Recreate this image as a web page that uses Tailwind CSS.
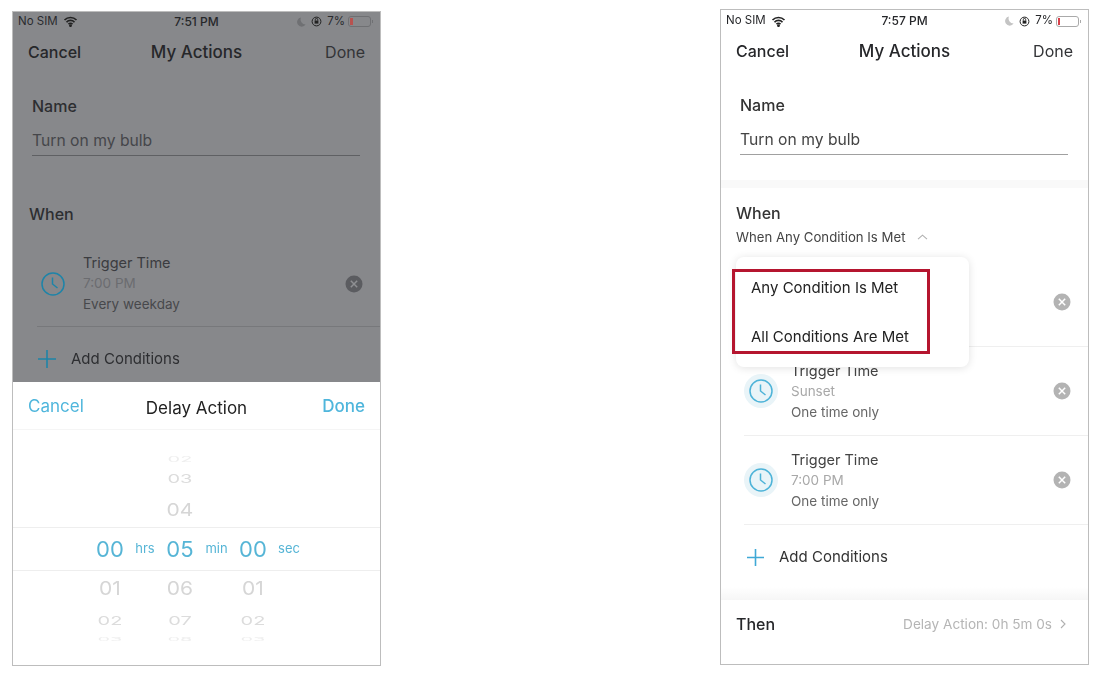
<!DOCTYPE html>
<html lang="en">
<head>
    <meta charset="UTF-8">
    <meta name="viewport" content="width=device-width, initial-scale=1.0">
    <title>My Actions</title>
    <script src="https://cdn.jsdelivr.net/npm/@tailwindcss/browser@4"></script>
</head>
<body class="bg-white [font-family:Inter,sans-serif]">
<div class="w-[1104px] h-[677px] flex justify-between pl-[12px] pr-[15px] overflow-hidden blur-[0.35px]">

    <!-- left phone: picker sheet over dimmed form -->
    <div class="mt-[11px] w-[369px] h-[655px] border border-[#bdbdbd] flex flex-col overflow-hidden">
        <div class="h-[370px] bg-[#87888b] flex flex-col text-[#26272a]">
            <div class="h-[19px] flex items-center justify-between pl-[5px] pr-[7px] text-[11.5px] relative">
                <div class="flex items-center gap-[5px] text-[#2a2b2e]">
                    <span>No SIM</span>
                    <svg width="15" height="11" viewBox="0 0 14 11" fill="none" stroke="#222" stroke-width="1.7"><path d="M1 4a8.5 8.5 0 0 1 12 0M3 6.2a5.4 5.4 0 0 1 8 0M5 8.2a2.6 2.6 0 0 1 4 0"/><circle cx="7" cy="9.6" r="0.6" fill="#222"/></svg>
                </div>
                <span class="absolute left-0 right-0 text-center text-[12px] font-medium">7:51 PM</span>
                <div class="flex items-center gap-[5px]">
                    <svg width="9" height="10" viewBox="0 0 9 10"><path d="M4 0.5a4.6 4.6 0 1 0 4.6 7A5 5 0 0 1 4 .5z" fill="#6f7073"/></svg>
                    <svg width="11" height="11" viewBox="0 0 11 11" fill="none" stroke="#222" stroke-width="1"><circle cx="5.5" cy="5.5" r="4.4"/><rect x="3.6" y="4.6" width="3.8" height="3" fill="#222" stroke="none"/><path d="M4.3 4.6V3.6a1.2 1.2 0 0 1 2.4 0v1"/></svg>
                    <span class="text-[#2a2b2e] mr-[-2px]">7%</span>
                    <div class="flex items-center">
                        <div class="w-[23px] h-[11px] rounded-[3px] border border-[#6f7073] pl-[1px] py-[1px]"><div class="w-[3px] h-full bg-[#b8524f]"></div></div>
                        <div class="w-[1px] h-[3px] bg-[#6f7073] ml-[1px]"></div>
                    </div>
                </div>
            </div>
            <div class="h-[41px] flex items-center justify-between px-[15px] text-[16px] relative">
                <span class="font-medium">Cancel</span>
                <span class="absolute left-0 right-0 text-center text-[17px] font-medium mt-[3px]">My Actions</span>
                <span class="text-[#333437]">Done</span>
            </div>
            <div class="pl-[19px] pr-[20px] pt-[24px]">
                <div class="text-[16px] font-medium leading-[20px] text-[#2d2e31]">Name</div>
                <div class="mt-[15px] text-[15.7px] leading-[20px] pb-[4px] border-b border-[#5f6063] text-[#45464a]">Turn on my bulb</div>
            </div>
            <div class="pl-[16px] mt-[48px] text-[16px] font-medium leading-[20px] text-[#2d2e31]">When</div>
            <div class="ml-[24px] mt-[17px] h-[86px] flex items-center border-b border-[#77787b]">
                <svg class="shrink-0 ml-[3px]" width="26" height="26" viewBox="0 0 26 26" fill="none" stroke="#1e84a8" stroke-width="1.5"><circle cx="13" cy="13" r="11"/><path d="M12.5 6.5v6.5l5 4"/></svg>
                <div class="ml-[17px] flex-1 flex flex-col text-[13.5px] leading-[21px] text-[#47484c]">
                    <span class="text-[14.5px] text-[#3b3c40]">Trigger Time</span>
                    <span class="text-[#6b6c70]">7:00 PM</span>
                    <span>Every weekday</span>
                </div>
                <svg class="mr-[17px]" width="18" height="18" viewBox="0 0 18 18"><circle cx="9" cy="9" r="8.5" fill="#5b5c60"/><path d="M5.8 5.8l6.4 6.4M12.2 5.8l-6.4 6.4" stroke="#8e8f92" stroke-width="1.5"/></svg>
            </div>
            <div class="pl-[25px] mt-[19px] flex items-center h-[26px]">
                <svg width="18" height="18" viewBox="0 0 18 18" stroke="#1e84a8" stroke-width="1.6"><path d="M9 0v18M0 9h18"/></svg>
                <span class="ml-[15px] text-[15px] text-[#2d2e31]">Add Conditions</span>
            </div>
        </div>
        <div class="h-[48px] pt-[3px] flex items-center justify-between px-[15px] border-b border-[#f5f5f5] text-[17px] relative">
            <span class="text-[#4fb6dc]">Cancel</span>
            <span class="absolute left-0 right-0 text-center text-[#222] mt-[3px]">Delay Action</span>
            <span class="font-medium text-[#4fb6dc]">Done</span>
        </div>
        <div class="flex-1 flex flex-col">
            <div class="h-[12px] mt-[24px] flex items-center text-[20px] text-[#eeeeee] pl-[152px]"><span class="w-[30px] text-center scale-y-[0.35] blur-[0.5px]">02</span></div>
            <div class="h-[26px] flex items-center text-[20px] text-[#dcdcdc] pl-[152px]"><span class="w-[30px] text-center scale-y-[0.6]">03</span></div>
            <div class="h-[35px] flex items-center text-[21px] text-[#d6d6d6] pl-[152px]"><span class="w-[30px] text-center scale-y-[0.85]">04</span></div>
            <div class="h-[44px] flex items-center border-y border-[#eeeeee] text-[#56b5d6] pl-[82px]">
                <span class="w-[30px] text-center text-[22px]">00</span>
                <span class="w-[40px] text-center text-[13px]">hrs</span>
                <span class="w-[30px] text-center text-[22px]">05</span>
                <span class="w-[43px] text-center text-[13px]">min</span>
                <span class="w-[30px] text-center text-[22px]">00</span>
                <span class="w-[42px] text-center text-[13px]">sec</span>
            </div>
            <div class="h-[35px] flex items-center text-[21px] text-[#d6d6d6] pl-[82px]">
                <span class="w-[30px] text-center scale-y-[0.9]">01</span><span class="w-[40px]"></span>
                <span class="w-[30px] text-center scale-y-[0.9]">06</span><span class="w-[43px]"></span>
                <span class="w-[30px] text-center scale-y-[0.9]">01</span>
            </div>
            <div class="h-[30px] flex items-center text-[20px] text-[#dcdcdc] pl-[82px]">
                <span class="w-[30px] text-center scale-y-[0.6]">02</span><span class="w-[40px]"></span>
                <span class="w-[30px] text-center scale-y-[0.6]">07</span><span class="w-[43px]"></span>
                <span class="w-[30px] text-center scale-y-[0.6]">02</span>
            </div>
            <div class="h-[6px] flex items-center text-[20px] text-[#eeeeee] pl-[82px]">
                <span class="w-[30px] text-center scale-y-[0.25] blur-[0.5px]">03</span><span class="w-[40px]"></span>
                <span class="w-[30px] text-center scale-y-[0.25] blur-[0.5px]">08</span><span class="w-[43px]"></span>
                <span class="w-[30px] text-center scale-y-[0.25] blur-[0.5px]">03</span>
            </div>
        </div>
    </div>

    <!-- right phone: form with condition menu open -->
    <div class="mt-[9px] w-[369px] h-[656px] border border-[#bdbdbd] flex flex-col overflow-hidden text-[#26272a] relative">
        <div class="h-[21px] pt-[1px] flex items-center justify-between pl-[5px] pr-[7px] text-[11.5px] relative">
            <div class="flex items-center gap-[5px]">
                <span>No SIM</span>
                <svg width="15" height="11" viewBox="0 0 14 11" fill="none" stroke="#222" stroke-width="1.7"><path d="M1 4a8.5 8.5 0 0 1 12 0M3 6.2a5.4 5.4 0 0 1 8 0M5 8.2a2.6 2.6 0 0 1 4 0"/><circle cx="7" cy="9.6" r="0.6" fill="#222"/></svg>
            </div>
            <span class="absolute left-0 right-0 text-center text-[12px] font-medium">7:57 PM</span>
            <div class="flex items-center gap-[5px]">
                <svg width="9" height="10" viewBox="0 0 9 10"><path d="M4 0.5a4.6 4.6 0 1 0 4.6 7A5 5 0 0 1 4 .5z" fill="#c4c4c4"/></svg>
                <svg width="11" height="11" viewBox="0 0 11 11" fill="none" stroke="#222" stroke-width="1"><circle cx="5.5" cy="5.5" r="4.4"/><rect x="3.6" y="4.6" width="3.8" height="3" fill="#222" stroke="none"/><path d="M4.3 4.6V3.6a1.2 1.2 0 0 1 2.4 0v1"/></svg>
                <span class="mr-[-2px]">7%</span>
                <div class="flex items-center">
                    <div class="w-[23px] h-[11px] rounded-[3px] border border-[#aaaaaa] pl-[1px] py-[1px]"><div class="w-[2px] h-full bg-[#d8404a]"></div></div>
                    <div class="w-[1px] h-[3px] bg-[#aaaaaa] ml-[1px]"></div>
                </div>
            </div>
        </div>
        <div class="h-[39px] flex items-center justify-between px-[15px] text-[16px] relative">
            <span class="font-medium">Cancel</span>
            <span class="absolute left-0 right-0 text-center text-[17px] font-medium mt-[3px]">My Actions</span>
            <span class="text-[#333437]">Done</span>
        </div>
        <div class="pl-[19px] pr-[20px] pt-[25px]">
            <div class="text-[16px] font-medium leading-[20px] text-[#333]">Name</div>
            <div class="mt-[15px] text-[15.7px] leading-[20px] pb-[4px] border-b border-[#a0a0a0] text-[#444]">Turn on my bulb</div>
        </div>
        <div class="h-[8px] mt-[25px] bg-[#f9f9f9]"></div>
        <div class="pl-[15px] mt-[15px] text-[16px] font-medium leading-[20px] text-[#333]">When</div>
        <div class="pl-[15px] mt-[5px] flex items-center text-[13.2px] leading-[18px] text-[#444]">
            <span>When Any Condition Is Met</span>
            <svg class="ml-[12px]" width="11" height="6" viewBox="0 0 11 6" fill="none" stroke="#b0b0b0" stroke-width="1.1"><path d="M1 5.2l4.5-4 4.5 4"/></svg>
        </div>

        <div class="absolute z-10 left-[15px] top-[247px] w-[233px] h-[110px] bg-white rounded-[8px] shadow-[0_1px_8px_rgba(0,0,0,0.12)] pl-[15px] text-[15px] text-[#222]">
            <div class="mt-[21px] leading-[20px]">Any Condition Is Met</div>
            <div class="mt-[29px] leading-[20px]">All Conditions Are Met</div>
        </div>
        <div class="absolute z-20 left-[11px] top-[259px] w-[198px] h-[85px] border-[3px] border-[#b5152f]"></div>

        <div class="ml-[23px] mt-[11px] h-[90px] flex items-center justify-end border-b border-[#efefef]">
            <svg class="mr-[17px]" width="18" height="18" viewBox="0 0 18 18"><circle cx="9" cy="9" r="8.5" fill="#b3b3b3"/><path d="M5.8 5.8l6.4 6.4M12.2 5.8l-6.4 6.4" stroke="#fff" stroke-width="1.5"/></svg>
        </div>
        <div class="ml-[23px] h-[89px] flex items-center border-b border-[#efefef]">
            <div class="shrink-0 w-[34px] h-[34px] rounded-full bg-[#e9f4f8] flex items-center justify-center">
                <svg width="26" height="26" viewBox="0 0 26 26" fill="none" stroke="#4db3d8" stroke-width="1.5"><circle cx="13" cy="13" r="11"/><path d="M12.5 6.5v6.5l5 4"/></svg>
            </div>
            <div class="ml-[13px] flex-1 flex flex-col text-[13.5px] leading-[21px] text-[#666]">
                <span class="text-[14.5px] text-[#444]">Trigger Time</span>
                <span class="text-[#a8a8a8]">Sunset</span>
                <span>One time only</span>
            </div>
            <svg class="mr-[17px]" width="18" height="18" viewBox="0 0 18 18"><circle cx="9" cy="9" r="8.5" fill="#b3b3b3"/><path d="M5.8 5.8l6.4 6.4M12.2 5.8l-6.4 6.4" stroke="#fff" stroke-width="1.5"/></svg>
        </div>
        <div class="ml-[23px] h-[89px] flex items-center border-b border-[#efefef]">
            <div class="shrink-0 w-[34px] h-[34px] rounded-full bg-[#e9f4f8] flex items-center justify-center">
                <svg width="26" height="26" viewBox="0 0 26 26" fill="none" stroke="#4db3d8" stroke-width="1.5"><circle cx="13" cy="13" r="11"/><path d="M12.5 6.5v6.5l5 4"/></svg>
            </div>
            <div class="ml-[13px] flex-1 flex flex-col text-[13.5px] leading-[21px] text-[#666]">
                <span class="text-[14.5px] text-[#444]">Trigger Time</span>
                <span class="text-[#a8a8a8]">7:00 PM</span>
                <span>One time only</span>
            </div>
            <svg class="mr-[17px]" width="18" height="18" viewBox="0 0 18 18"><circle cx="9" cy="9" r="8.5" fill="#b3b3b3"/><path d="M5.8 5.8l6.4 6.4M12.2 5.8l-6.4 6.4" stroke="#fff" stroke-width="1.5"/></svg>
        </div>
        <div class="pl-[26px] mt-[19px] flex items-center h-[26px]">
            <svg width="17" height="17" viewBox="0 0 17 17" stroke="#3fa9d6" stroke-width="1.6"><path d="M8.5 0v17M0 8.5h17"/></svg>
            <span class="ml-[15px] text-[15px] text-[#333]">Add Conditions</span>
        </div>
        <div class="h-[13px] mt-[17px] bg-gradient-to-b from-white to-[#f6f6f6]"></div>
        <div class="flex-1 flex items-start justify-between pl-[15px] pr-[22px] pt-[13px]">
            <span class="text-[16px] font-medium leading-[22px]">Then</span>
            <div class="flex items-center gap-[8px] text-[13.6px] leading-[22px] text-[#b5b5b5]">
                <span>Delay Action: 0h 5m 0s</span>
                <svg width="6" height="10" viewBox="0 0 6 10" fill="none" stroke="#b0b0b0" stroke-width="1.1"><path d="M1 1l4 4-4 4"/></svg>
            </div>
        </div>
    </div>
</div>
</body>
</html>
